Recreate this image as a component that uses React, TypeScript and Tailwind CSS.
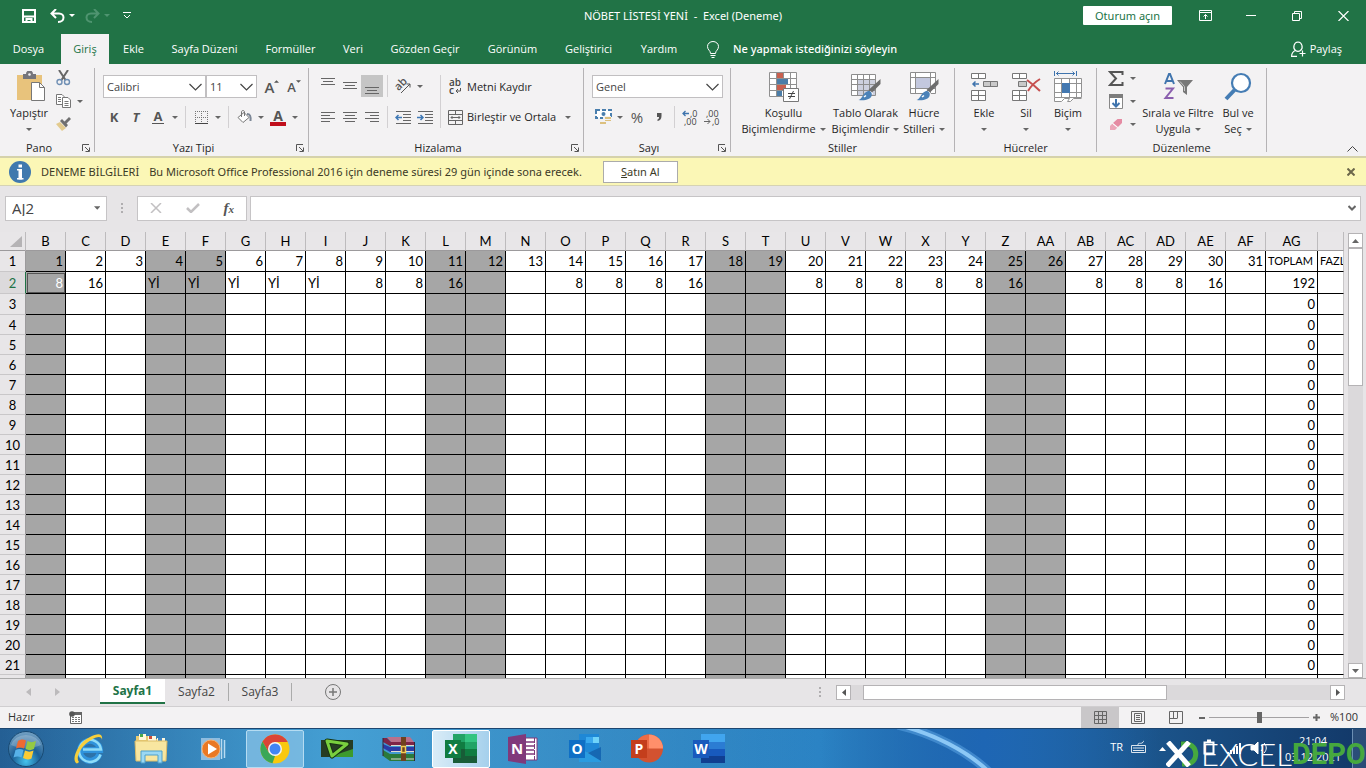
import type { ReactNode } from 'react';

const DAY_COLUMNS = [
  'B', 'C', 'D', 'E', 'F', 'G', 'H', 'I', 'J', 'K', 'L', 'M', 'N', 'O', 'P', 'Q',
  'R', 'S', 'T', 'U', 'V', 'W', 'X', 'Y', 'Z', 'AA', 'AB', 'AC', 'AD', 'AE', 'AF',
];

const SHIFTS = [
  '8', '16', '', 'Yİ', 'Yİ', 'Yİ', 'Yİ', 'Yİ', '8', '8', '16', '', '', '8', '8', '8',
  '16', '', '', '8', '8', '8', '8', '8', '16', '', '8', '8', '8', '16', '',
];

const WEEKEND_DAYS = [1, 4, 5, 11, 12, 18, 19, 25, 26];

const ROWS = Array.from({ length: 22 }, (_, i) => i + 1);

const TABS = [
  { name: 'Dosya', width: 'w-[61px] pr-1' },
  { name: 'Giriş', width: 'w-[48px]' },
  { name: 'Ekle', width: 'w-[49px]' },
  { name: 'Sayfa Düzeni', width: 'w-[93px]' },
  { name: 'Formüller', width: 'w-[79px]' },
  { name: 'Veri', width: 'w-[46px]' },
  { name: 'Gözden Geçir', width: 'w-[98px]' },
  { name: 'Görünüm', width: 'w-[77px]' },
  { name: 'Geliştirici', width: 'w-[75px]' },
  { name: 'Yardım', width: 'w-[66px]' },
];

function Caret({ className = 'text-[#666]' }: { className?: string }) {
  return (
    <svg width="6" height="3" viewBox="0 0 6 3" className={`shrink-0 ${className}`} aria-hidden="true">
      <path d="M0 0h6L3 3z" fill="currentColor" />
    </svg>
  );
}

function CaretButton({ label }: { label: string }) {
  return (
    <button aria-label={label} className="flex h-[22px] w-3 items-center justify-center">
      <Caret />
    </button>
  );
}

function Tool({ label, active, children }: { label: string; active?: boolean; children: ReactNode }) {
  return (
    <button
      aria-label={label}
      className={`flex h-[22px] w-[22px] shrink-0 items-center justify-center ${active ? 'bg-[#c5c5c5]' : ''}`}
    >
      {children}
    </button>
  );
}

function SmallDivider() {
  return <div className="mx-1 h-[22px] w-px bg-[#d2d0d2]" />;
}

function Group({ title, width, launcher, children }: { title: string; width: string; launcher?: boolean; children: ReactNode }) {
  return (
    <>
      <section className={`flex shrink-0 flex-col ${width}`} aria-label={title}>
        <div className="h-[76px]">{children}</div>
        <div className="flex h-4 items-center">
          <span className="flex-1 text-center">{title}</span>
          {launcher && (
            <button aria-label={`${title} ayarları`} className="flex w-4 justify-center">
              <svg width="8" height="8" viewBox="0 0 8 8" fill="none" stroke="#555">
                <path d="M.5 7V.5H7M3 3l4 4M7.5 3.500v4h-4" />
              </svg>
            </button>
          )}
        </div>
      </section>
      <div className="my-1 w-px shrink-0 bg-[#b5b3b5]" />
    </>
  );
}

function BigButton({ lines, width, icon }: { lines: [string, string]; width: string; icon: ReactNode }) {
  return (
    <button className={`flex shrink-0 flex-col items-center ${width}`}>
      <span className="flex h-[41px] items-center pt-1">{icon}</span>
      <span className="h-4 whitespace-nowrap leading-4">{lines[0]}</span>
      <span className="flex h-4 items-center gap-1 whitespace-nowrap leading-4">
        {lines[1]}
        <Caret />
      </span>
    </button>
  );
}

function Combo({ label, value, width }: { label: string; value: string; width: string }) {
  return (
    <div className={`relative h-[23px] ${width}`}>
      <select
        aria-label={label}
        className="h-full w-full appearance-none border border-[#c1bfc1] bg-white pl-[3px] text-[#444]"
      >
        <option>{value}</option>
      </select>
      <svg width="13" height="8" viewBox="0 0 13 8" className="pointer-events-none absolute top-2 right-1" fill="none" stroke="#444" strokeWidth="1.200">
        <path d="M.5 1l6 6 6-6" />
      </svg>
    </div>
  );
}

function Lines({ rows, y = 0 }: { rows: [number, number][]; y?: number }) {
  return (
    <svg width="14" height="16" viewBox="0 0 14 16" stroke="#666" aria-hidden="true">
      {rows.map(([x1, x2], i) => (
        <path key={i} d={`M${x1} ${y + i * 3 + 0.5}H${x2}`} />
      ))}
    </svg>
  );
}

function IndentIcon({ flip }: { flip?: boolean }) {
  return (
    <svg width="17" height="13" viewBox="0 0 17 13" fill="none" stroke="#666">
      <path d="M1 .5h15M8 3.500h8M8 6.500h8M8 9.500h8M1 12.500h15" />
      <path d={flip ? 'M0 6.500h5.500M3.500 4l2.500 2.500L3.500 9' : 'M1 6.500h6M3.500 4L1 6.500 3.500 9'} stroke="#3f78b5" strokeWidth="1.500" />
    </svg>
  );
}

function GridBase() {
  return (
    <g>
      <path d="M.5 .5h27v24H.5z" fill="#fff" />
      <path d="M.5 .5h27v24H.5zM.5 6.500h27M.5 12.500h27M.5 18.500h27M7.500 .5v24M14.500 .5v24M21.500 .5v24" fill="none" stroke="#909090" />
    </g>
  );
}

function Brush() {
  return (
    <g>
      <path d="M29.500 7v5l-9 9-3-3z" fill="#6d6d6d" />
      <path d="M19 19.500l2.500 2.500" stroke="#fff" strokeWidth="1.500" />
      <path d="M17 19c3 0 4.500 2 3.500 5s-6 5-13 4c4-1 4-7 9.500-9z" fill="#4b82b8" />
      <path d="M13 25l2-1.500" stroke="#fff" strokeWidth="1.500" />
    </g>
  );
}

function ConditionalIcon() {
  return (
    <svg width="30" height="30" viewBox="0 0 30 30">
      <GridBase />
      <path d="M8 1h6v5H8zM8 13h9v5H8z" fill="#c9604f" />
      <path d="M8 7h11v5H8zM8 19h5v5H8z" fill="#4b7da8" />
      <path d="M14.500 16.500h15v13h-15z" fill="#fff" stroke="#777" />
      <path d="M19 21.500h7M19 24.500h7M24.500 19l-4 8" stroke="#444" />
    </svg>
  );
}

function TableStyleIcon() {
  return (
    <svg width="30" height="30" viewBox="0 0 30 30">
      <path d="M.5 2.500h24v21H.5z" fill="#fff" />
      <path d="M7 8h18v15H7z" fill="#cdd0de" />
      <path d="M.5 2.500h24v21H.5zM.5 7.500h24M.5 12.500h24M.5 18.500h24M6.500 2.500v21M12.500 2.500v21M18.500 2.500v21" fill="none" stroke="#8d8d8d" />
      <Brush />
    </svg>
  );
}

function CellStyleIcon() {
  return (
    <svg width="30" height="30" viewBox="0 0 30 30">
      <path d="M1.500 .5h25v21h-25z" fill="#fff" stroke="#8d8d8d" />
      <path d="M1.500 5.500h25M1.500 16.500h25M6.500 .5v21M21.500 .5v21" stroke="#8d8d8d" />
      <path d="M7 6h14v10H7z" fill="#c3c8de" />
      <Brush />
    </svg>
  );
}

function InsertIcon() {
  return (
    <svg width="28" height="28" viewBox="0 0 28 28" fill="none" stroke="#777">
      <path d="M1.500 .5h14v5h-14zM8.500 .5v5M1.500 17.500h14v10h-14zM1.500 22.500h14M8.500 17.500v10" fill="#fff" />
      <path d="M13.500 8.500h14v5h-14zM20.500 8.500v5" fill="#c9c9c9" />
      <path d="M3 11h6M5.500 8.500L3 11l2.500 2.500" stroke="#3f74ad" strokeWidth="1.500" />
    </svg>
  );
}

function DeleteIcon() {
  return (
    <svg width="30" height="28" viewBox="0 0 30 28" fill="none" stroke="#777">
      <path d="M1.500 .5h14v5h-14zM8.500 .5v5M1.500 17.500h14v10h-14zM1.500 22.500h14M8.500 17.500v10" fill="#fff" />
      <path d="M7.500 8.500h8v5h-8z" fill="#c9c9c9" />
      <path d="M16 7c4 3 9 7 13 11M29 6c-5 3-9 7-12 12" stroke="#c75050" strokeWidth="2" />
    </svg>
  );
}

function FormatIcon() {
  return (
    <svg width="28" height="31" viewBox="0 0 28 31" fill="none">
      <path d="M.5 0v5M22.500 0v5M2 2.500h19M4.500 .5l-2 2 2 2M18.500 .5l2 2-2 2" stroke="#3f74ad" />
      <path d="M.5 7.500h27v20h-6c-3 0-3 3-5 3H.5z" fill="#fff" />
      <path d="M.5 7.500h27v19H.5zM.5 12.500h27M.5 21.500h27M7.500 7.500v19M15.500 7.500v19M22.500 7.500v19M.5 26.500v4h7l3-3h5l-2 3h3l3-3h8" stroke="#929292" />
      <path d="M8 12h8v10H8z" fill="#4378b0" />
    </svg>
  );
}

function SortFilterIcon() {
  return (
    <svg width="30" height="30" viewBox="0 0 30 30" fill="none">
      <path d="M2 12L6 2h1l4 10M3.500 9h6" stroke="#3f74ad" strokeWidth="2" />
      <path d="M2.500 16.500h7.500L2.500 26h8" stroke="#8a5fae" strokeWidth="2" />
      <path d="M14 8h16l-6 7v8l-4-3v-5z" fill="#787878" />
      <path d="M17 9.500l4.500 5V19" stroke="#c8c8c8" />
    </svg>
  );
}

function FindIcon() {
  return (
    <svg width="30" height="30" viewBox="0 0 30 30" fill="none">
      <circle cx="18" cy="11" r="9" fill="#fff" stroke="#457db4" strokeWidth="2.200" />
      <path d="M11.500 18L3 27" stroke="#457db4" strokeWidth="4" />
    </svg>
  );
}

function TitleBar() {
  return (
    <header className="grid h-[34px] shrink-0 grid-cols-[1fr_auto_1fr] pb-[3px] text-white">
      <div className="flex items-center pl-[22px]">
        <button aria-label="Kaydet">
          <svg width="14" height="14" viewBox="0 0 14 14" fill="none" stroke="#fff" strokeWidth="2">
            <path d="M1 1h12v12H1zM1 7.500h12M4.500 13v-3h5v3" />
          </svg>
        </button>
        <button aria-label="Geri Al" className="ml-[14px] flex items-center gap-1">
          <svg width="15" height="14" viewBox="0 0 15 14" fill="none" stroke="#fff" strokeWidth="2">
            <path d="M6 0L1.500 4.500 6 9M2 4.500h7c3 0 4.500 2 4.500 4S12 13 8 13" />
          </svg>
          <Caret className="text-white" />
        </button>
        <button aria-label="Yinele" className="ml-[10px] flex items-center gap-1">
          <svg width="15" height="14" viewBox="0 0 15 14" fill="none" stroke="#4f9470" strokeWidth="2">
            <path d="M9 0l4.500 4.500L9 9M13 4.500H6c-3 0-4.500 2-4.500 4S3 13 7 13" />
          </svg>
          <Caret className="text-[#4f9470]" />
        </button>
        <button aria-label="Hızlı erişimi özelleştir" className="ml-[13px]">
          <svg width="8" height="7" viewBox="0 0 8 7" fill="none" stroke="#fff">
            <path d="M0 .5h8M1 3l3 3 3-3" />
          </svg>
        </button>
      </div>
      <h1 className="self-center font-['Noto_Sans',sans-serif] whitespace-pre">{'NÖBET LİSTESİ YENİ  -  Excel (Deneme)'}</h1>
      <div className="flex items-center justify-end">
        <button className="mr-[10px] h-[19px] w-[89px] rounded-[1px] bg-white font-['Noto_Sans',sans-serif] text-[#217346]">Oturum açın</button>
        <button aria-label="Şerit görüntüleme" className="flex w-[46px] justify-center">
          <svg width="13" height="11" viewBox="0 0 13 11" fill="none" stroke="#fff">
            <path d="M.5 .5h12v10H.5zM.5 2.500h12M6.500 9V4.500M4.500 6.500l2-2 2 2" />
          </svg>
        </button>
        <button aria-label="Simge durumuna küçült" className="flex w-[46px] justify-center">
          <span className="h-px w-[10px] bg-white" />
        </button>
        <button aria-label="Önceki boyut" className="flex w-[46px] justify-center">
          <svg width="10" height="10" viewBox="0 0 10 10" fill="none" stroke="#fff">
            <path d="M.5 2.500h7v7h-7zM2.500 2V.5h7v7H8" />
          </svg>
        </button>
        <button aria-label="Kapat" className="flex w-[46px] justify-center">
          <svg width="11" height="10" viewBox="0 0 11 10" fill="none" stroke="#fff" strokeWidth="1.200">
            <path d="M.5 0l10 10M10.500 0l-10 10" />
          </svg>
        </button>
      </div>
    </header>
  );
}

function TabBar() {
  return (
    <nav className="flex h-[30px] shrink-0 items-stretch text-white">
      {TABS.map(({ name, width }) => (
        <button
          key={name}
          className={`whitespace-nowrap ${width} ${name === 'Giriş' ? 'bg-[#f3f2f3] text-[#217346]' : ''}`}
        >
          {name}
        </button>
      ))}
      <button className="ml-[15px] flex items-center gap-[14px] font-['Noto_Sans',sans-serif] font-medium">
        <svg width="12" height="17" viewBox="0 0 12 17" fill="none" stroke="#fff">
          <path d="M3.500 12.500c0-3-3-3.500-3-7a5.500 5 0 0 1 11 0c0 3.500-3 4-3 7zM3.500 14.500h5M4.500 16.500h3" />
        </svg>
        Ne yapmak istediğinizi söyleyin
      </button>
      <button className="mr-6 ml-auto flex items-center gap-1">
        <svg width="15" height="16" viewBox="0 0 15 16" fill="none" stroke="#fff" strokeWidth="1.200">
          <path d="M7 1a4.500 4.800 0 0 1 2.500 8.500M7 1a4.500 4.800 0 0 0-2.500 8.500C2 10.500.6 12.500.6 15.400H6M4.500 9.500c1.500 1 3.500 1 5 0M11.500 9.500v6M8.500 12.500h6" />
        </svg>
        Paylaş
      </button>
    </nav>
  );
}

function ClipboardGroup() {
  return (
    <Group title="Pano" width="w-[94px]" launcher>
      <div className="flex pl-2">
        <button className="flex w-[42px] flex-col items-center">
          <span className="flex h-[41px] items-center pt-1 pl-1">
            <svg width="30" height="31" viewBox="0 0 30 31">
              <path d="M1 4h25v25H1z" fill="#e8c37c" />
              <path d="M7 3h3a3.500 3.500 0 0 1 7 0h3v5H7z" fill="#75757b" />
              <circle cx="13.500" cy="3.500" r="1.300" fill="#f3f2f3" />
              <path d="M15.500 11.500h8l5 5v13h-13z" fill="#fff" stroke="#777" />
              <path d="M23.500 11.500v5h5" fill="none" stroke="#777" />
            </svg>
          </span>
          <span className="h-4 leading-4">Yapıştır</span>
          <span className="flex h-4 items-center"><Caret /></span>
        </button>
        <div className="flex flex-col gap-px pt-[3px] pl-[2px]">
          <Tool label="Kes">
            <svg width="15" height="16" viewBox="0 0 15 16" fill="none" strokeWidth="2">
              <path d="M3 0l6.500 10M12 0L5.500 10" stroke="#666" />
              <circle cx="3.500" cy="12" r="2.500" stroke="#6f8fb4" strokeWidth="1.400" />
              <circle cx="11" cy="12" r="2.500" stroke="#6f8fb4" strokeWidth="1.400" />
            </svg>
          </Tool>
          <div className="flex">
            <Tool label="Kopyala">
              <svg width="15" height="14" viewBox="0 0 15 14" fill="#fff" stroke="#777">
                <path d="M.5 .5H6l2 2v8H.5zM2 3.500h3M2 5.500h3M2 7.500h3" />
                <path d="M6.500 3.500h5.500l2.500 2.500v7.500h-8zM8.500 7.500h4M8.500 9.500h4M8.500 11.500h4" />
              </svg>
            </Tool>
            <CaretButton label="Kopyalama seçenekleri" />
          </div>
          <Tool label="Biçim Boyacısı">
            <svg width="16" height="14" viewBox="0 0 16 14">
              <path d="M1 7l4-2 6 6-4 3z" fill="#e3cb8e" />
              <path d="M5 4l2-2 2.500 2.500L14 0l2 2-4.500 4.500L13 8l-2 2.500z" fill="#707070" />
            </svg>
          </Tool>
        </div>
      </div>
    </Group>
  );
}

function FontGroup() {
  return (
    <Group title="Yazı Tipi" width="w-[213px]" launcher>
      <div className="flex flex-col gap-2 pt-[11px] pl-2">
        <div className="flex items-center">
          <Combo label="Yazı tipi" value="Calibri" width="w-[103px]" />
          <Combo label="Yazı tipi boyutu" value="11" width="w-[51px]" />
          <button aria-label="Yazı tipini büyüt" className="ml-1 flex h-[22px] w-[22px] items-start justify-center text-[15px] leading-[22px] font-semibold text-[#555]">
            A<svg width="5" height="3" viewBox="0 0 6 3" className="mt-1"><path d="M0 3h6L3 0z" fill="#555" /></svg>
          </button>
          <button aria-label="Yazı tipini küçült" className="flex h-[22px] w-[22px] items-start justify-center text-[13px] leading-[23px] font-semibold text-[#555]">
            A<svg width="5" height="3" viewBox="0 0 6 3" className="mt-1"><path d="M0 0h6L3 3z" fill="#555" /></svg>
          </button>
        </div>
        <div className="flex text-[13px] font-bold text-[#555]">
          <Tool label="Kalın">K</Tool>
          <Tool label="İtalik"><i>T</i></Tool>
          <Tool label="Altı Çizili"><span className="border-b border-[#555] px-[2px] leading-[13px]">A</span></Tool>
          <CaretButton label="Altı çizili seçenekleri" />
          <SmallDivider />
          <Tool label="Kenarlıklar">
            <svg width="13" height="13" viewBox="0 0 13 13" fill="none" stroke="#777">
              <path d="M0 .5h13M0 6.500h13M.5 0v12M6.500 0v12M12.500 0v12" strokeDasharray="1 1" />
              <path d="M0 12.500h13" stroke="#444" />
            </svg>
          </Tool>
          <CaretButton label="Kenarlık seçenekleri" />
          <SmallDivider />
          <Tool label="Dolgu Rengi">
            <svg width="16" height="15" viewBox="0 0 16 15" fill="none" stroke="#777">
              <path d="M2 7.500l6-5 5 5-6 5z" fill="#fff" />
              <path d="M5.500 7V2c0-2 3-2 3 0v4" />
              <path d="M11 4c3 0 4 2 3.500 7" stroke="#7c8796" strokeWidth="2" />
            </svg>
          </Tool>
          <CaretButton label="Dolgu seçenekleri" />
          <Tool label="Yazı Tipi Rengi">
            <span className="w-4 border-b-4 border-[#c00f1c] text-center text-sm leading-[13px]">A</span>
          </Tool>
          <CaretButton label="Yazı rengi seçenekleri" />
        </div>
      </div>
    </Group>
  );
}

function AlignmentGroup() {
  return (
    <Group title="Hizalama" width="w-[274px]" launcher>
      <div className="flex pt-[11px] pl-2">
        <div className="flex w-[119px] flex-col gap-2">
          <div className="flex h-[23px]">
            <Tool label="Üste Hizala"><Lines rows={[[0, 14], [2, 12], [0, 14]]} /></Tool>
            <Tool label="Ortaya Hizala"><Lines rows={[[0, 14], [2, 12], [0, 14]]} y={4} /></Tool>
            <Tool label="Alta Hizala" active><Lines rows={[[0, 14], [2, 12], [0, 14]]} y={9} /></Tool>
            <SmallDivider />
            <Tool label="Yönlendirme">
              <svg width="17" height="16" viewBox="0 0 17 16" fill="none" stroke="#555" className="overflow-visible">
                <text x="1" y="11" transform="rotate(-45 5 9)" fontSize="11" fontWeight="600" fill="#555" stroke="none">ab</text>
                <path d="M6 15L15 6M11.500 6H15v3.500" />
              </svg>
            </Tool>
            <CaretButton label="Yönlendirme seçenekleri" />
          </div>
          <div className="flex">
            <Tool label="Sola Hizala"><Lines rows={[[0, 14], [0, 9], [0, 14], [0, 9]]} y={3} /></Tool>
            <Tool label="Ortala"><Lines rows={[[0, 14], [2, 12], [0, 14], [2, 12]]} y={3} /></Tool>
            <Tool label="Sağa Hizala"><Lines rows={[[0, 14], [5, 14], [0, 14], [5, 14]]} y={3} /></Tool>
            <SmallDivider />
            <Tool label="Girintiyi Azalt"><IndentIcon /></Tool>
            <Tool label="Girintiyi Artır"><IndentIcon flip /></Tool>
          </div>
        </div>
        <div className="mx-1 w-px bg-[#d2d0d2]" />
        <div className="flex flex-col gap-2 pl-[3px]">
          <button className="flex h-[23px] items-center gap-1">
            <svg width="15" height="16" viewBox="0 0 15 16" fill="none" stroke="#555" className="overflow-visible">
              <text x="1" y="7" fontSize="10" fontWeight="600" fill="#444" stroke="none">ab</text>
              <text x="1" y="15" fontSize="10" fontWeight="600" fill="#444" stroke="none">c</text>
              <path d="M12.500 9v3H8M10 10l-2 2 2 2" />
            </svg>
            Metni Kaydır
          </button>
          <div className="flex items-center">
            <button className="flex items-center gap-1">
              <svg width="15" height="15" viewBox="0 0 15 15" fill="none" stroke="#666">
                <path d="M.5 .5h14v14H.5zM.5 4.500h14M.5 10.500h14M7.500 .5v4M7.500 10.500v4M3 7.500h9M4.500 6L3 7.500 4.500 9M10.500 6L12 7.500 10.500 9" />
              </svg>
              Birleştir ve Ortala
            </button>
            <span className="pl-[6px]"><CaretButton label="Birleştirme seçenekleri" /></span>
          </div>
        </div>
      </div>
    </Group>
  );
}

function NumberGroup() {
  return (
    <Group title="Sayı" width="w-[146px]" launcher>
      <div className="flex flex-col gap-2 pt-[11px] pl-2">
        <Combo label="Sayı biçimi" value="Genel" width="w-[131px]" />
        <div className="flex">
          <Tool label="Para birimi">
            <svg width="17" height="16" viewBox="0 0 17 16">
              <path d="M1 1h15v8H1z" fill="#fff" stroke="#4a7fae" strokeWidth="2" strokeDasharray="4 2" />
              <circle cx="8.500" cy="5" r="2" fill="#4a7fae" />
              <path d="M8 7h8v8H5v-3h3z" fill="#f3f2f3" />
              <path d="M10 8h6v2h-6zM10 11h6v1h-6zM5 13h6v2H5z" fill="#dcc07e" />
            </svg>
          </Tool>
          <CaretButton label="Para birimi seçenekleri" />
          <Tool label="Yüzde"><span className="text-[15px] font-medium text-[#555]">%</span></Tool>
          <Tool label="Virgül">
            <svg width="5" height="8" viewBox="0 0 5 8"><path d="M0 0h4.500v3C4.500 6 3 7.500.5 8V6.500C2 6 2 5 2 4H0z" fill="#555" /></svg>
          </Tool>
          <SmallDivider />
          <Tool label="Ondalık Artır">
            <svg width="16" height="15" viewBox="0 0 16 15" fill="none" className="overflow-visible">
              <text x="8" y="7" fontSize="9" fill="#444">,0</text>
              <text x="2" y="15" fontSize="9" fill="#444">,00</text>
              <path d="M1 3.500h6M3.500 1L1 3.500 3.500 6" stroke="#3f74ad" strokeWidth="1.300" />
            </svg>
          </Tool>
          <Tool label="Ondalık Azalt">
            <svg width="16" height="15" viewBox="0 0 16 15" fill="none" className="overflow-visible">
              <text x="2" y="7" fontSize="9" fill="#444">,00</text>
              <text x="8" y="15" fontSize="9" fill="#444">,0</text>
              <path d="M0 11.500h6M3.500 9L6 11.500 3.500 14" stroke="#666" />
            </svg>
          </Tool>
        </div>
      </div>
    </Group>
  );
}

function EditingGroup() {
  return (
    <Group title="Düzenleme" width="w-[169px]">
      <div className="flex">
        <div className="flex w-[42px] flex-col gap-px pt-[3px] pl-2">
          <div className="flex">
            <Tool label="Otomatik Toplam">
              <svg width="16" height="15" viewBox="0 0 16 15" fill="none" stroke="#555" strokeWidth="2">
                <path d="M14.500 4V1H2l6 6.500L2 14h12.500v-3" />
              </svg>
            </Tool>
            <CaretButton label="Toplam seçenekleri" />
          </div>
          <div className="flex">
            <Tool label="Dolgu">
              <svg width="14" height="15" viewBox="0 0 14 15" fill="none">
                <path d="M.5 .5h13v14H.5z" fill="#fff" stroke="#888" />
                <path d="M0 0h14v4H0z" fill="#7d7d7d" />
                <path d="M7 5v7M3.500 9L7 12.500 10.500 9" stroke="#3f74ad" strokeWidth="2" />
              </svg>
            </Tool>
            <CaretButton label="Dolgu yönü" />
          </div>
          <div className="flex">
            <Tool label="Temizle">
              <svg width="14" height="13" viewBox="0 0 14 13">
                <path d="M8.500 1h4.500v4L9 9 4 5z" fill="#e58ba3" />
                <path d="M3.500 5.500l5 4L6 12H1V8z" fill="#eba6b8" />
                <path d="M3.500 5.500l5 4" stroke="#fff" />
              </svg>
            </Tool>
            <CaretButton label="Temizleme seçenekleri" />
          </div>
        </div>
        <BigButton width="w-[78px]" lines={['Sırala ve Filtre', 'Uygula']} icon={<SortFilterIcon />} />
        <BigButton width="w-[42px]" lines={['Bul ve', 'Seç']} icon={<FindIcon />} />
      </div>
    </Group>
  );
}

function Ribbon() {
  return (
    <div className="flex h-[92px] shrink-0 bg-[#f3f2f3] text-[#262626]">
      <ClipboardGroup />
      <FontGroup />
      <AlignmentGroup />
      <NumberGroup />
      <Group title="Stiller" width="w-[223px]">
        <div className="flex pl-[7px]">
          <BigButton width="w-[91px]" lines={['Koşullu', 'Biçimlendirme']} icon={<ConditionalIcon />} />
          <BigButton width="w-[73px]" lines={['Tablo Olarak', 'Biçimlendir']} icon={<TableStyleIcon />} />
          <BigButton width="w-[44px]" lines={['Hücre', 'Stilleri']} icon={<CellStyleIcon />} />
        </div>
      </Group>
      <Group title="Hücreler" width="w-[141px]">
        <div className="flex pl-2">
          <BigButton width="w-[42px]" lines={['Ekle', '']} icon={<InsertIcon />} />
          <BigButton width="w-[42px]" lines={['Sil', '']} icon={<DeleteIcon />} />
          <BigButton width="w-[42px]" lines={['Biçim', '']} icon={<FormatIcon />} />
        </div>
      </Group>
      <EditingGroup />
      <button aria-label="Şeridi daralt" className="mt-auto mr-2 mb-1 ml-auto">
        <svg width="11" height="6" viewBox="0 0 11 6" fill="none" stroke="#444">
          <path d="M.5 5.500l5-5 5 5" />
        </svg>
      </button>
    </div>
  );
}

function TrialBar() {
  return (
    <div className="flex h-[30px] shrink-0 items-center border-t-2 border-b border-t-[#d5d2ab] border-b-[#d6d3b4] bg-[#fbf7b6] pl-[9px] font-['Noto_Sans',sans-serif] text-[#3b3a26]">
      <svg width="22" height="22" viewBox="0 0 22 22" aria-hidden="true">
        <circle cx="11" cy="11" r="11" fill="#4079ae" />
        <path d="M9.500 3.500h3.500v3H9.500zM9.500 8h3.500v10.500H9.500z" fill="#fff" />
        <path d="M8 8h3v1.500H8zM8 17h6.500v1.500H8z" fill="#fff" />
      </svg>
      <span className="ml-[10px]">DENEME BİLGİLERİ</span>
      <span className="ml-[10px]">Bu Microsoft Office Professional 2016 için deneme süresi 29 gün içinde sona erecek.</span>
      <button className="ml-[21px] h-[22px] w-[75px] border border-[#ababab] bg-white">
        <u>S</u>atın Al
      </button>
      <button aria-label="İletiyi kapat" className="mr-[11px] ml-auto">
        <svg width="8" height="8" viewBox="0 0 8 8" stroke="#6b674a" strokeWidth="2">
          <path d="M.5 .5l7 7M7.500 .5l-7 7" />
        </svg>
      </button>
    </div>
  );
}

function FormulaBar() {
  return (
    <div className="flex h-[46px] shrink-0 items-center px-[5px] pb-[2px]">
      <div className="flex h-[25px] w-[102px] items-center border border-[#c6c4c6] bg-white pr-[6px]">
        <input aria-label="Ad Kutusu" defaultValue="AJ2" className="w-full min-w-0 pl-[6px] text-[15px] text-[#444]" />
        <svg width="7" height="4" viewBox="0 0 7 4"><path d="M0 0h7L3.500 4z" fill="#666" /></svg>
      </div>
      <svg width="2" height="11" viewBox="0 0 2 11" className="mx-[14px]" fill="#b0aeb0">
        <path d="M0 0h2v2H0zM0 4h2v2H0zM0 8h2v2H0z" />
      </svg>
      <div className="flex h-[25px] w-[110px] items-center justify-between border border-[#c6c4c6] bg-white px-3">
        <button aria-label="İptal">
          <svg width="12" height="10" viewBox="0 0 12 10" stroke="#c2c0c2" strokeWidth="1.500"><path d="M1 0l10 10M11 0L1 10" /></svg>
        </button>
        <button aria-label="Gir">
          <svg width="14" height="10" viewBox="0 0 14 10" fill="none" stroke="#c2c0c2" strokeWidth="2.500"><path d="M1 5l4 4 8-8" /></svg>
        </button>
        <button aria-label="İşlev Ekle" className="font-['Liberation_Serif',serif] text-[15px] leading-4 font-bold text-[#555] italic">
          f<span className="text-[11px]">x</span>
        </button>
      </div>
      <div className="ml-[3px] flex h-[25px] flex-1 items-center border border-[#c6c4c6] bg-white pr-1">
        <input aria-label="Formül Çubuğu" className="min-w-0 flex-1 px-1" />
        <svg width="8" height="6" viewBox="0 0 8 6" fill="none" stroke="#666" strokeWidth="2"><path d="M.5 1L4 4.500 7.500 1" /></svg>
      </div>
    </div>
  );
}

function rowHeight(row: number) {
  if (row === 2) return 'h-[22px]';
  return row === 1 || row === 3 ? 'h-[21px]' : 'h-5';
}

function dayCell(row: number, index: number) {
  if (row === 1) return String(index + 1);
  return row === 2 ? SHIFTS[index] : '';
}

function totalCell(row: number) {
  if (row === 1) return 'TOPLAM';
  return row === 2 ? '192' : '0';
}

function Sheet() {
  const head = 'h-[19px] border-r border-b border-r-[#bdbbbd] border-b-[#9c9a9c] p-0 text-center font-normal';
  const cell = 'border-r border-b border-black p-0 px-[2px] whitespace-nowrap';
  return (
    <div className="flex min-h-0 flex-1">
      <div className="min-w-0 flex-1 overflow-hidden">
        <table className="w-full table-fixed border-separate border-spacing-0 bg-white font-['Lato',sans-serif] text-[13px] leading-4 text-black">
          <thead className="bg-[#e8e6e8]">
            <tr>
              <th aria-label="Tümünü seç" className={`w-[26px] ${head}`}>
                <svg width="12" height="11" viewBox="0 0 12 11" className="ml-auto mr-[3px]"><path d="M12 0v11H0z" fill="#b5b3b5" /></svg>
              </th>
              {DAY_COLUMNS.map((name) => (
                <th key={name} scope="col" className={`w-10 ${head}`}>{name}</th>
              ))}
              <th scope="col" className={`w-[52px] ${head}`}>AG</th>
              <th aria-label="AH" scope="col" className={head} />
            </tr>
          </thead>
          <tbody>
            {ROWS.map((row) => (
              <tr key={row} className={rowHeight(row)}>
                <th
                  scope="row"
                  className={`border-r border-b border-b-[#c9c7c9] p-0 text-center font-normal ${
                    row === 2 ? 'border-r-[#217346] bg-[#dcdadc] text-[#217346]' : 'border-r-[#9c9a9c] bg-[#e8e6e8]'
                  }`}
                >
                  {row}
                </th>
                {DAY_COLUMNS.map((name, i) => {
                  const value = dayCell(row, i);
                  return (
                    <td
                      key={name}
                      className={`${cell} ${value === 'Yİ' ? 'text-left' : 'text-right'} ${
                        WEEKEND_DAYS.includes(i + 1) ? 'bg-[#a6a6a6]' : ''
                      } ${row === 2 && i === 0 ? 'text-white outline-1 -outline-offset-2 outline-[#555]' : ''}`}
                    >
                      {value}
                    </td>
                  );
                })}
                <td className={`${cell} ${row === 1 ? 'text-left text-[11px]' : 'text-right'}`}>{totalCell(row)}</td>
                <td className={`overflow-hidden ${cell} border-r-[#c9c7c9] text-[11px]`}>{row === 1 ? 'FAZLA' : ''}</td>
              </tr>
            ))}
          </tbody>
        </table>
      </div>
      <div className="flex w-[22px] shrink-0 flex-col items-center pt-px">
        <button aria-label="Yukarı kaydır" className="flex h-[15px] w-[15px] items-center justify-center border border-[#b5b3b5] bg-white">
          <svg width="7" height="4" viewBox="0 0 7 4"><path d="M0 4h7L3.500 0z" fill="#666" /></svg>
        </button>
        <div className="flex w-[15px] flex-1 flex-col bg-[#dbd9db]">
          <div className="h-[138px] border border-[#b5b3b5] bg-white" />
        </div>
        <button aria-label="Aşağı kaydır" className="flex h-[15px] w-[15px] items-center justify-center border border-[#b5b3b5] bg-white">
          <svg width="7" height="4" viewBox="0 0 7 4"><path d="M0 0h7L3.500 4z" fill="#666" /></svg>
        </button>
      </div>
    </div>
  );
}

function SheetTabs() {
  return (
    <div className="flex h-7 shrink-0 items-start border-t border-[#ababab] text-xs text-[#444]">
      <div className="flex h-[26px] w-[100px] items-center pl-[26px]">
        <button aria-label="Önceki sayfa"><svg width="5" height="8" viewBox="0 0 5 8"><path d="M5 0v8L0 4z" fill="#bcbabc" /></svg></button>
        <button aria-label="Sonraki sayfa" className="ml-6"><svg width="5" height="8" viewBox="0 0 5 8"><path d="M0 0v8l5-4z" fill="#bcbabc" /></svg></button>
      </div>
      <button className="h-[25px] w-[65px] border-b-2 border-[#217346] bg-white font-bold text-[#217346]">Sayfa1</button>
      <button className="my-1 h-[18px] w-16 border-r border-[#ababab]">Sayfa2</button>
      <button className="my-1 h-[18px] w-[63px] border-r border-[#ababab]">Sayfa3</button>
      <button aria-label="Yeni sayfa" className="mt-[5px] ml-[33px]">
        <svg width="16" height="16" viewBox="0 0 16 16" fill="none" stroke="#777">
          <circle cx="8" cy="8" r="7.500" />
          <path d="M8 4v8M4 8h8" strokeWidth="1.500" />
        </svg>
      </button>
      <div className="mr-[21px] ml-auto flex h-[27px] w-[39%] items-center">
        <svg width="2" height="11" viewBox="0 0 2 11" className="mr-[15px] ml-[7px]" fill="#b0aeb0">
          <path d="M0 0h2v2H0zM0 4h2v2H0zM0 8h2v2H0z" />
        </svg>
        <button aria-label="Sola kaydır" className="flex h-[15px] w-[15px] items-center justify-center border border-[#b5b3b5] bg-white">
          <svg width="4" height="7" viewBox="0 0 4 7"><path d="M4 0v7L0 3.500z" fill="#555" /></svg>
        </button>
        <div className="flex h-[15px] flex-1 bg-[#dbd9db] pl-3">
          <div className="w-[65%] border border-[#b5b3b5] bg-white" />
        </div>
        <button aria-label="Sağa kaydır" className="flex h-[15px] w-[15px] items-center justify-center border border-[#b5b3b5] bg-white">
          <svg width="4" height="7" viewBox="0 0 4 7"><path d="M0 0v7l4-3.500z" fill="#555" /></svg>
        </button>
      </div>
    </div>
  );
}

function StatusBar() {
  return (
    <footer className="flex h-[22px] shrink-0 items-center border-t border-[#d0ced0] bg-[#f3f2f3] text-[#333]">
      <span className="ml-2 pb-px">Hazır</span>
      <button aria-label="Makro kaydet" className="ml-[34px]">
        <svg width="13" height="13" viewBox="0 0 13 13">
          <path d="M5 1h8v3H5z" fill="#666" />
          <path d="M1.500 5v7.500h11V4" fill="#fff" stroke="#666" />
          <path d="M3 6.500h8M3 8.500h8M3 10.500h8" stroke="#777" strokeDasharray="2 1" />
          <circle cx="3" cy="3" r="2.800" fill="#555" />
        </svg>
      </button>
      <div className="ml-auto flex h-full">
        <button aria-label="Normal" className="flex w-[38px] items-center justify-center bg-[#c9c7c9]">
          <svg width="13" height="13" viewBox="0 0 13 13" fill="none" stroke="#666"><path d="M.5 .5h12v12H.5zM.5 4.500h12M.5 8.500h12M4.500 .5v12M8.500 .5v12" /></svg>
        </button>
        <button aria-label="Sayfa Düzeni görünümü" className="flex w-[38px] items-center justify-center">
          <svg width="14" height="13" viewBox="0 0 14 13" fill="none" stroke="#666"><path d="M.5 .5h13v12H.5zM3.500 2.500h7v8h-7zM5 4.500h4M5 6.500h4M5 8.500h4" /></svg>
        </button>
        <button aria-label="Sayfa Sonu Önizleme" className="flex w-[38px] items-center justify-center">
          <svg width="14" height="13" viewBox="0 0 14 13" fill="none" stroke="#666"><path d="M.5 .5h13v12H.5zM4.500 .5v6.500M8.500 .5v6.500M.5 7.500h8" /></svg>
        </button>
      </div>
      <button aria-label="Uzaklaştır" className="ml-1 h-[2px] w-[6px] bg-[#666]" />
      <input
        type="range"
        aria-label="Yakınlaştırma"
        min="10"
        max="190"
        defaultValue="100"
        className="mx-1 h-px w-[100px] appearance-none bg-[#a3a1a3] [&::-webkit-slider-thumb]:h-[11px] [&::-webkit-slider-thumb]:w-[5px] [&::-webkit-slider-thumb]:appearance-none [&::-webkit-slider-thumb]:bg-[#666]"
      />
      <button aria-label="Yakınlaştır">
        <svg width="7" height="7" viewBox="0 0 7 7" stroke="#666" strokeWidth="2"><path d="M3.500 0v7M0 3.500h7" /></svg>
      </button>
      <span className="mr-2 ml-[10px] pb-px">%100</span>
    </footer>
  );
}

function StartIcon() {
  return (
    <svg width="38" height="38" viewBox="0 0 38 38">
      <defs>
        <radialGradient id="orb" cx=".5" cy=".85" r=".8">
          <stop offset="0" stopColor="#45c3ee" />
          <stop offset=".5" stopColor="#1c5f96" />
          <stop offset="1" stopColor="#6d9cc0" />
        </radialGradient>
      </defs>
      <circle cx="19" cy="19" r="17.500" fill="url(#orb)" stroke="#184a73" />
      <path d="M4 15a15.500 13.500 0 0 1 30 0c-8 4-22 4-30 0z" fill="#fff" opacity=".22" />
      <path d="M11 11c3-2 5-2 8-.5l-2 8c-3-1.500-5-1.500-8 0z" fill="#ee6a32" />
      <path d="M20.500 11c3 1.500 5 1.500 8.500 0l-2 8c-3 1.500-5.500 1.500-8.500 0z" fill="#95c944" />
      <path d="M8.500 20c3-1.500 5-1.500 8 0l-2 7.500c-3-1.500-5-1.500-8 0z" fill="#57b1e8" />
      <path d="M18 20.500c3 1.500 5.500 1.500 8.500 0l-2 8c-3 1.500-5.500 1-8.500-.5z" fill="#fbcb35" />
    </svg>
  );
}

function ExplorerIcon() {
  return (
    <svg width="34" height="34" viewBox="0 0 34 34" fill="none">
      <path d="M27.500 22a10 10 0 1 1 .5-4H11" stroke="#2f93dc" strokeWidth="6" />
      <path d="M28.500 22.500a11 11 0 1 1 .5-5H11" stroke="#8fdcf8" strokeWidth="2.500" />
      <path d="M4 31C-1 26 7 10 18 5 26 1 31 1 30 8c0-4-5-4-11 0C9 14 3 25 7 30c-1 1-2 2-3 1z" fill="#f7cf3c" />
    </svg>
  );
}

function FolderIcon() {
  return (
    <svg width="34" height="32" viewBox="0 0 34 32">
      <path d="M2 3h12l2 3h15v22H2z" fill="#e9cb72" />
      <path d="M5 1h7v6H5z" fill="#fff8dc" />
      <path d="M6 1h3v3H6z" fill="#4aa84b" />
      <path d="M14 3h8v5h-8z" fill="#fff8dc" />
      <path d="M15 3h3v3h-3z" fill="#cc4a39" />
      <path d="M23 5h8v4h-8z" fill="#fff8dc" />
      <path d="M24 5h4v3h-4z" fill="#3f84c6" />
      <path d="M1 8h32l-1 20H2z" fill="#f8e6a0" stroke="#dcbd68" />
      <path d="M7 30V18h21v12h-4v-8H11v8z" fill="#9bd8f3" stroke="#4fa0cb" />
    </svg>
  );
}

function PlayerIcon() {
  return (
    <svg width="26" height="26" viewBox="0 0 26 26">
      <path d="M1 2h19v22H1z" fill="#8ebde0" />
      <path d="M21.500 3v20M24.500 4v18" stroke="#b9dbf2" strokeWidth="1.500" />
      <circle cx="11" cy="13" r="9" fill="#e97824" stroke="#f7b06f" />
      <path d="M8 7.500l9 5.500-9 5.500z" fill="#fff" />
    </svg>
  );
}

function ChromeIcon() {
  return (
    <svg width="30" height="30" viewBox="0 0 30 30">
      <circle cx="15" cy="15" r="14.500" fill="#f9c80e" />
      <path d="M2.500 7.500A14.500 14.500 0 0 1 27.700 8H15l-6.200 10.500z" fill="#db4437" />
      <path d="M2.500 7.500L8.800 18.500 15 22l-2.500 7.300A14.500 14.500 0 0 1 2.500 7.500z" fill="#3aa757" />
      <circle cx="15" cy="15" r="7" fill="#f4f4f4" />
      <circle cx="15" cy="15" r="5.500" fill="#4285f4" />
    </svg>
  );
}

function GreenArrowIcon() {
  return (
    <svg width="32" height="24" viewBox="0 0 32 24" fill="none">
      <path d="M0 3h32v17H0z" fill="#263c24" />
      <path d="M8 20h24V12z" fill="#3d9a2c" />
      <path d="M6 4l20 3L11 19z" stroke="#163312" strokeWidth="5" strokeLinejoin="round" />
      <path d="M6 4l20 3L11 19z" stroke="#79cf3e" strokeWidth="3" strokeLinejoin="round" />
    </svg>
  );
}

function ArchiveIcon() {
  return (
    <svg width="34" height="26" viewBox="0 0 34 26">
      <path d="M5 1h23l4 5H9z" fill="#b9718b" />
      <path d="M1 2h4l4 4h23v4H8L1 6z" fill="#7d2548" />
      <path d="M1 8l7 3h24v5H8l-7-4z" fill="#2b3aa6" />
      <path d="M1 14l7 4h24v7H8l-7-5z" fill="#2a7a3b" />
      <path d="M9 9.500h23M9 15.500h23M9 23h23" stroke="#dedbd2" />
      <path d="M1 2v18M32.500 6v19" stroke="#3a2333" />
      <path d="M19 1h5v24h-5z" fill="#70421f" />
      <path d="M19.500 10.500h4v6h-4z" fill="none" stroke="#f0ce55" strokeWidth="1.500" />
    </svg>
  );
}

function OfficeTile({ letter, color }: { letter: string; color: string }) {
  return (
    <g>
      <path d="M0 6h16v18H0z" fill={color} />
      <text x="8" y="20" textAnchor="middle" fontSize="14" fontWeight="700" fill="#fff">{letter}</text>
    </g>
  );
}

function ExcelIcon() {
  return (
    <svg width="32" height="29" viewBox="0 0 32 29">
      <path d="M8 0h24v29H8z" fill="#21a366" />
      <path d="M20 0h12v8H20z" fill="#33c481" />
      <path d="M8 8h12v7H8zM20 15h12v7H20z" fill="#107c41" />
      <path d="M8 15h12v14H8zM20 22h12v7H20z" fill="#185c37" />
      <OfficeTile letter="X" color="#107c41" />
    </svg>
  );
}

function OneNoteIcon() {
  return (
    <svg width="30" height="30" viewBox="0 0 30 30">
      <path d="M16 4h13v22H16z" fill="#fff" stroke="#80397b" />
      <path d="M18 8h8M18 12h8M18 16h8M18 20h8" stroke="#80397b" strokeWidth="1.500" />
      <path d="M26.500 4v22" stroke="#80397b" strokeDasharray="5 1" />
      <path d="M0 3l18-3v30L0 27z" fill="#80397b" />
      <text x="9" y="20" textAnchor="middle" fontSize="15" fontWeight="700" fill="#fff">N</text>
    </svg>
  );
}

function OutlookIcon() {
  return (
    <svg width="32" height="29" viewBox="0 0 32 29">
      <path d="M10 0h20v18H10z" fill="#1f88d6" />
      <path d="M17 3h7v6h-7z" fill="#39a8ee" />
      <path d="M24 3h6v6h-6z" fill="#6fd3f9" />
      <path d="M10 14l22 12v2H10z" fill="#2a9be0" />
      <path d="M32 13v14L19 19z" fill="#1668b3" />
      <OfficeTile letter="O" color="#0f6fc5" />
    </svg>
  );
}

function PowerPointIcon() {
  return (
    <svg width="32" height="29" viewBox="0 0 32 29">
      <circle cx="18" cy="14.500" r="14" fill="#d35230" />
      <path d="M4 14.500a14 14 0 0 1 14-14v14z" fill="#ed6c47" />
      <path d="M18 .5a14 14 0 0 1 14 14H18z" fill="#ff8f6b" />
      <OfficeTile letter="P" color="#c43e1c" />
    </svg>
  );
}

function WordIcon() {
  return (
    <svg width="32" height="29" viewBox="0 0 32 29">
      <path d="M8 0h24v8H8z" fill="#41a5ee" />
      <path d="M8 8h24v7H8z" fill="#2b7cd3" />
      <path d="M8 15h24v7H8z" fill="#185abd" />
      <path d="M8 22h24v7H8z" fill="#103f91" />
      <OfficeTile letter="W" color="#185abd" />
    </svg>
  );
}

const TASKS = [
  { name: 'Internet Explorer', icon: <ExplorerIcon /> },
  { name: 'Dosya Gezgini', icon: <FolderIcon /> },
  { name: 'Media Player', icon: <PlayerIcon /> },
  { name: 'Chrome', icon: <ChromeIcon />, state: 'open' },
  { name: 'Video Düzenleyici', icon: <GreenArrowIcon /> },
  { name: 'WinRAR', icon: <ArchiveIcon /> },
  { name: 'Excel', icon: <ExcelIcon />, state: 'active' },
  { name: 'OneNote', icon: <OneNoteIcon /> },
  { name: 'Outlook', icon: <OutlookIcon /> },
  { name: 'PowerPoint', icon: <PowerPointIcon /> },
  { name: 'Word', icon: <WordIcon /> },
];

function taskClass(state?: string) {
  if (state === 'open') return 'rounded-[2px] border border-[#b5dcf2] bg-[#8cc4e8]/70';
  if (state === 'active') return 'rounded-[2px] border border-white bg-linear-to-r from-[#d9ecf7] to-[#a5d0ec]';
  return '';
}

function Taskbar() {
  return (
    <div className="relative flex h-10 shrink-0 items-center overflow-hidden border-t border-[#1d4670] bg-linear-to-r from-[#245f94] via-[#2b83c4] via-60% to-[#123868] text-white">
      <div className="absolute inset-0 bg-linear-to-r from-transparent via-[#4cacdf]/80 via-25% to-transparent to-60%" />
      <div className="absolute inset-0 bg-linear-to-r from-transparent from-60% via-[#1e66b4] via-72% to-transparent to-85%" />
      <svg width="110" height="40" viewBox="0 0 110 40" className="absolute top-0 left-[65%]" fill="none">
        <path d="M10 -4c34 8 70 26 92 48" stroke="#5fa8e6" strokeWidth="9" opacity=".5" />
        <path d="M10 -4c34 8 70 26 92 48" stroke="#8cc8f6" strokeWidth="4" />
      </svg>
      <div className="relative flex h-full items-center">
        <button aria-label="Başlat" className="flex w-[60px] justify-center pr-2"><StartIcon /></button>
        {TASKS.map(({ name, icon, state }) => (
          <button key={name} aria-label={name} className={`mr-1 flex h-[38px] w-[58px] items-center justify-center ${taskClass(state)}`}>
            {icon}
          </button>
        ))}
      </div>
      <div className="relative ml-auto flex h-full items-center">
        <span className="pb-1">TR</span>
        <svg width="15" height="14" viewBox="0 0 15 14" className="mb-1 ml-2" fill="none" stroke="#dce5ee">
          <path d="M.5 5.500h14v7H.5zM2 8h11M2 10.500h11M7 5c0-3 2-1 4-2s1-2 2-2" />
        </svg>
        <svg width="7" height="4" viewBox="0 0 7 4" className="ml-[13px]"><path d="M0 4h7L3.500 0z" fill="#fff" /></svg>
        <svg width="87" height="18" viewBox="0 0 87 18" className="mb-1 ml-[14px]" fill="none" stroke="#fff">
          <path d="M1 3v14M2 4h8v6H2" stroke="#0d2c52" />
          <path d="M24.500 4.500h9v11h-9zM27 2.500h4" strokeWidth="2" />
          <path d="M48 16v-2M51 16v-4M54 16v-6M57 16V8M60 16V5" strokeWidth="2" />
          <path d="M71 8h3l4-4v12l-4-4h-3z" fill="#fff" />
          <path d="M81 7c2 2 2 4 0 6M84 5c3 3 3 7 0 10" />
        </svg>
        <div className="ml-[15px] w-[62px] text-center leading-4">
          <p>21:04</p>
          <p>03.12.2021</p>
        </div>
        <button aria-label="Masaüstünü göster" className="ml-2 h-full w-[14px] border-l border-[#6c8fb3] bg-white/10" />
      </div>
      <div className="pointer-events-none absolute -bottom-[6px] left-[calc(100%-200px)] flex items-center font-['Lato',sans-serif] text-[31px] leading-10">
        <svg width="34" height="26" viewBox="0 0 34 26" fill="none" className="mr-px">
          <path d="M15 3h5c13 0 13 20 0 20h-4" stroke="#46a83e" strokeWidth="5" />
          <path d="M2 1l21 24M23 1L1 25" stroke="#fff" strokeWidth="5" />
        </svg>
        <span className="font-light">EXCEL</span>
        <span className="font-['Roboto',sans-serif] text-[29px] font-bold text-[#46a83e]">DEPO</span>
      </div>
    </div>
  );
}

export default function App() {
  return (
    <div className="flex h-screen flex-col overflow-hidden bg-[#e7e5e7] font-['Open_Sans','Noto_Sans',sans-serif] text-[11px] leading-4">
      <div className="shrink-0 bg-[#217346]">
        <TitleBar />
        <TabBar />
      </div>
      <Ribbon />
      <TrialBar />
      <FormulaBar />
      <Sheet />
      <SheetTabs />
      <StatusBar />
      <Taskbar />
    </div>
  );
}
